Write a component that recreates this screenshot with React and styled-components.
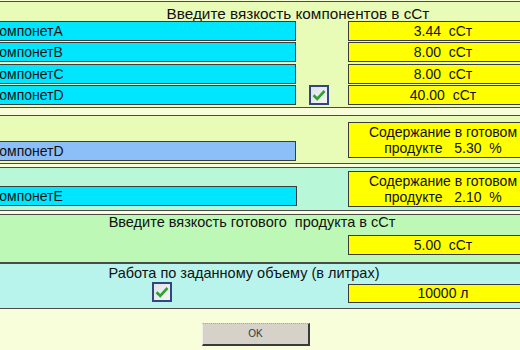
import React from 'react';
import styled, { createGlobalStyle } from 'styled-components';

const GlobalStyle = createGlobalStyle`
  html, body {
    margin: 0;
    padding: 0;
    background: #f8fdda;
    overflow: hidden;
  }
  body {
    font-family: "Liberation Sans", Arial, sans-serif;
    font-size: 14px;
    color: #111;
  }
`;

const Form = styled.div`
  width: 614px;
  margin-left: -10px;
  padding-top: 1px;
  display: flex;
  flex-direction: column;
`;

const Panel = styled.section`
  background: ${p => p.$bg};
  margin-top: ${p => p.$mt || 0}px;
  border-top: 1px solid #4a4a4a;
  border-bottom: 1px solid #4a4a4a;
  padding: ${p => p.$pad};
  display: flex;
  flex-direction: column;
`;

const Title = styled.div`
  width: ${p => p.$w}px;
  text-align: center;
  font-size: ${p => p.$fs || 14.5}px;
  line-height: 15px;
  white-space: pre;
`;

const Rows = styled.div`
  display: flex;
  flex-direction: column;
  gap: 1.33px;
`;

const Line = styled.div`
  display: grid;
  grid-template-columns: 306px 52px 190px;
  height: ${p => p.$h}px;
  margin-top: ${p => p.$mt || 0}px;
`;

const Field = styled.div`
  align-self: ${p => p.$align || 'center'};
  margin-bottom: ${p => p.$mb || 0}px;
  width: ${p => p.$w || 306}px;
  height: 20px;
  box-sizing: border-box;
  background: ${p => p.$bg || '#00e6ff'};
  border: 1px solid #3c3c3c;
  padding-left: 2px;
  line-height: 18px;
  white-space: nowrap;
`;

const Slot = styled.div`
  display: flex;
  align-items: ${p => p.$align || 'center'};
  padding-left: ${p => p.$pl || 13}px;
  grid-column: ${p => p.$col || 'auto'};
`;

const Value = styled.div`
  grid-column: 3;
  align-self: ${p => p.$align || 'center'};
  height: ${p => p.$h || 20}px;
  box-sizing: border-box;
  background: #ffff00;
  border: 1px solid #3c3c3c;
  display: flex;
  flex-direction: column;
  align-items: center;
  justify-content: center;
  line-height: 16px;
  white-space: pre;
`;

const Box = styled.div`
  width: 20px;
  height: 20px;
  box-sizing: border-box;
  border: 2px solid #33477f;
  background: linear-gradient(135deg, #dfe3e8, #f3f4f6);
  display: flex;
  align-items: center;
  justify-content: center;
`;

const Bottom = styled.div`
  padding-top: 14px;
  padding-left: 212px;
`;

const OkButton = styled.button`
  width: 108px;
  height: 23px;
  box-sizing: border-box;
  background: #d6d2ca;
  border-top: 1px dotted #a8a8a0;
  border-left: 1px solid #f0f0ea;
  border-right: 2px solid #3a3a3a;
  border-bottom: 2px solid #3a3a3a;
  font-family: "Liberation Sans", Arial, sans-serif;
  font-size: 10px;
  color: #2a3a3a;
  padding: 0;
`;

function Check() {
  return (
    <Box>
      <svg width="14" height="12" viewBox="0 0 14 12">
        <path d="M1.5 6.2 L5.2 9.8 L12.5 2" fill="none" stroke="#2ea12e" strokeWidth="2.6" />
      </svg>
    </Box>
  );
}

const viscosities = [
  { name: 'компонетA', value: '3.44  сСт' },
  { name: 'компонетB', value: '8.00  сСт' },
  { name: 'компонетC', value: '8.00  сСт' },
  { name: 'компонетD', value: '40.00  сСт', check: true },
];

export default function App() {
  return (
    <>
      <GlobalStyle />
      <Form>
        <Panel $bg="#e8fcb8" $pad="4px 0 2px">
          <Title $w={616} $fs={15.3}>Введите вязкость компонентов в сСт</Title>
          <Rows>
            {viscosities.map(v => (
              <Line key={v.name} $h={20}>
                <Field>{v.name}</Field>
                <Slot>{v.check && <Check />}</Slot>
                <Value>{v.value}</Value>
              </Line>
            ))}
          </Rows>
        </Panel>

        <Panel $bg="#e8fcb8" $mt={7} $pad="6px 0 2px">
          <Line $h={39}>
            <Field $align="end" $bg="#8cbef8">компонетD</Field>
            <Slot />
            <Value $align="start" $h={36}>
              <span>Содержание в готовом</span>
              <span>продукте   5.30  %</span>
            </Value>
          </Line>
        </Panel>

        <Panel $bg="#b8f8d8" $mt={3} $pad="3px 0 3px">
          <Line $h={36}>
            <Field $align="end" $mb={1} $w={307}>компонетE</Field>
            <Slot />
            <Value $h={36}>
              <span>Содержание в готовом</span>
              <span>продукте   2.10  %</span>
            </Value>
          </Line>
        </Panel>

        <Panel $bg="#bef8b6" $mt={3} $pad="0 0 7px">
          <Title $w={524}>Введите вязкость готового  продукта в сСт</Title>
          <Line $h={20} $mt={5}>
            <Value>5.00  сСт</Value>
          </Line>
        </Panel>

        <Panel $bg="#b8f4ec" $pad="2px 0 5px">
          <Title $w={508}>Работа по заданному объему (в литрах)</Title>
          <Line $h={21} $mt={1}>
            <Slot $col="1" $pl={162} $align="flex-start"><Check /></Slot>
            <Value $align="end" $h={19}>10000 л</Value>
          </Line>
        </Panel>

        <Bottom>
          <OkButton>OK</OkButton>
        </Bottom>
      </Form>
    </>
  );
}
